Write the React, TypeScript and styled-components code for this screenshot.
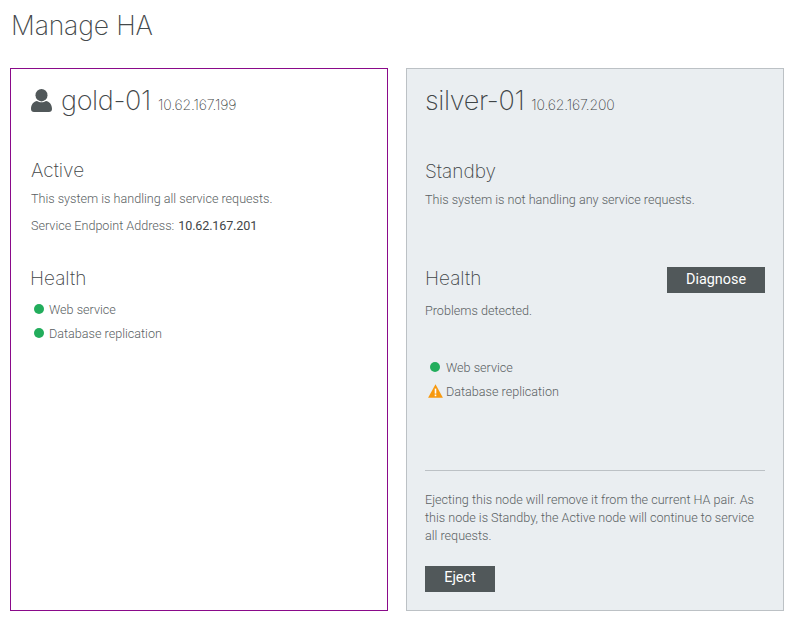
import React from "react";
import styled, { createGlobalStyle } from "styled-components";

const Global = createGlobalStyle`
  html, body { margin: 0; padding: 0; background: #fff; }
  body { font-family: "Inter", "Roboto", sans-serif; font-weight: 300; color: #51585a; }
`;

const Page = styled.div`
  width: 794px;
  height: 617px;
  padding: 9px 10px 6px 10px;
  box-sizing: border-box;
  display: flex;
  flex-direction: column;
  overflow: hidden;
`;

const Title = styled.h1`
  margin: 0 0 0 1px;
  height: 59px;
  font: 200 26.5px/32px "Inter", sans-serif;
  letter-spacing: -0.15px;
  color: #44494b;
`;

const Columns = styled.div`
  display: grid;
  grid-template-columns: 378px 378px;
  gap: 18px;
  height: 543px;
`;

const Card = styled.section<{ $selected?: boolean }>`
  box-sizing: border-box;
  border: 1px solid ${(p) => (p.$selected ? "#8a0a8a" : "#bcc1c5")};
  background: ${(p) => (p.$selected ? "#fff" : "#eaeef1")};
  padding: ${(p) => (p.$selected ? "14px 20px 0 20px" : "14px 18px 18px 18px")};
  display: flex;
  flex-direction: column;
`;

const NameRow = styled.div`
  display: flex;
  align-items: baseline;
  height: 36px;
`;

const UserIcon = styled.svg`
  width: 21px;
  height: 24px;
  margin-right: 9px;
  align-self: center;
  fill: #51585a;
`;

const Name = styled.span`
  font: 200 27px/36px "Inter", sans-serif;
  letter-spacing: -0.35px;
  color: #3f4547;
`;

const Ip = styled.span`
  font: 200 14px/20px "Inter", sans-serif;
  letter-spacing: -0.15px;
  margin-left: 7px;
  color: #3f4547;
`;

const Section = styled.h2<{ $top: number; $shift?: number }>`
  margin: ${(p) => p.$top}px 0 0 ${(p) => p.$shift ?? 0}px;
  font: 200 19px/26px "Inter", sans-serif;
  color: #3f4547;
`;

const Body = styled.p<{ $top?: number }>`
  margin: ${(p) => p.$top ?? 0}px 0 0 0;
  font: 300 12.6px/18px "Roboto", sans-serif;
  color: #5a6163;
`;

const Strong = styled.span`
  font-weight: 400;
  letter-spacing: -0.15px;
  margin-left: 1px;
  color: #3f4547;
`;

const HealthHeader = styled.div`
  display: flex;
  justify-content: space-between;
  align-items: center;
  margin-top: 58px;
  height: 26px;
`;

const Button = styled.button`
  border: 0;
  border-radius: 0;
  background: #51585a;
  color: #fff;
  font: 400 14.4px/24px "Roboto", sans-serif;
  height: 26px;
  padding: 0 0 2px 0;
`;

const DiagnoseButton = styled(Button)`
  width: 98px;
  padding-bottom: 0;
`;

const EjectButton = styled(Button)`
  width: 70px;
  margin-top: 21px;
`;

const List = styled.ul<{ $top: number; $left: number; $gutter: number }>`
  --icon-gutter: ${(p) => p.$gutter}px;
  list-style: none;
  margin: ${(p) => p.$top}px 0 0 ${(p) => p.$left}px;
  padding: 0;
  display: flex;
  flex-direction: column;
  gap: 6px;
`;

const Item = styled.li`
  display: flex;
  align-items: center;
  height: 18px;
  font: 300 12.6px/18px "Roboto", sans-serif;
  color: #5a6163;
`;

const IconSlot = styled.span`
  width: 20px;
  height: 18px;
  margin-right: var(--icon-gutter);
  display: flex;
  align-items: center;
  justify-content: center;
  flex: none;
`;

const Dot = styled.span`
  width: 10px;
  height: 10px;
  border-radius: 50%;
  background: #22ad5c;
  margin-top: -2px;
`;

const WarnIcon = styled.svg`
  width: 15px;
  height: 14px;
  margin-top: -2px;
`;

const Divider = styled.hr`
  border: 0;
  border-top: 1px solid #bcc1c5;
  margin: auto 0 0 0;
  width: 100%;
`;

const StatusItem = ({ warn, children }: { warn?: boolean; children: React.ReactNode }) => (
  <Item>
    <IconSlot>
      {warn ? (
        <WarnIcon viewBox="0 0 15 14">
          <path d="M7.5 0.3 L14.9 13.7 H0.1 Z" fill="#f7990f" strokeLinejoin="round" />
          <rect x="6.7" y="4.6" width="1.6" height="5" fill="#fff" />
          <rect x="6.7" y="10.5" width="1.6" height="1.7" fill="#fff" />
        </WarnIcon>
      ) : (
        <Dot />
      )}
    </IconSlot>
    {children}
  </Item>
);

export default function App() {
  return (
    <>
      <Global />
      <Page>
        <Title>Manage HA</Title>
        <Columns>
          <Card $selected>
            <NameRow>
              <UserIcon viewBox="0 0 21 24">
                <ellipse cx="10.5" cy="6.2" rx="6" ry="6.2" />
                <path d="M0 20 C0 15 3 12.5 6 12 C8.5 13.8 12.5 13.8 15 12 C18 12.5 21 15 21 20 C21 22 19.8 23 18 23 H3 C1.2 23 0 22 0 20 Z" />
              </UserIcon>
              <Name>gold-01</Name>
              <Ip>10.62.167.199</Ip>
            </NameRow>
            <Section $top={39}>Active</Section>
            <Body $top={6}>This system is handling all service requests.</Body>
            <Body $top={9}>
              Service Endpoint Address: <Strong>10.62.167.201</Strong>
            </Body>
            <Section $top={31} $shift={-1}>Health</Section>
            <List $top={9} $left={-2} $gutter={0}>
              <StatusItem>Web service</StatusItem>
              <StatusItem>Database replication</StatusItem>
            </List>
          </Card>
          <Card>
            <NameRow>
              <Name>silver-01</Name>
              <Ip>10.62.167.200</Ip>
            </NameRow>
            <Section $top={40}>Standby</Section>
            <Body $top={6}>This system is not handling any service requests.</Body>
            <HealthHeader>
              <Section $top={-2}>Health</Section>
              <DiagnoseButton>Diagnose</DiagnoseButton>
            </HealthHeader>
            <Body $top={9}>Problems detected.</Body>
            <List $top={39} $left={0} $gutter={1}>
              <StatusItem>Web service</StatusItem>
              <StatusItem warn>Database replication</StatusItem>
            </List>
            <Divider />
            <Body $top={20}>
              Ejecting this node will remove it from the current HA pair. As this node is Standby, the Active node will continue to service all requests.
            </Body>
            <div><EjectButton>Eject</EjectButton></div>
          </Card>
        </Columns>
      </Page>
    </>
  );
}
